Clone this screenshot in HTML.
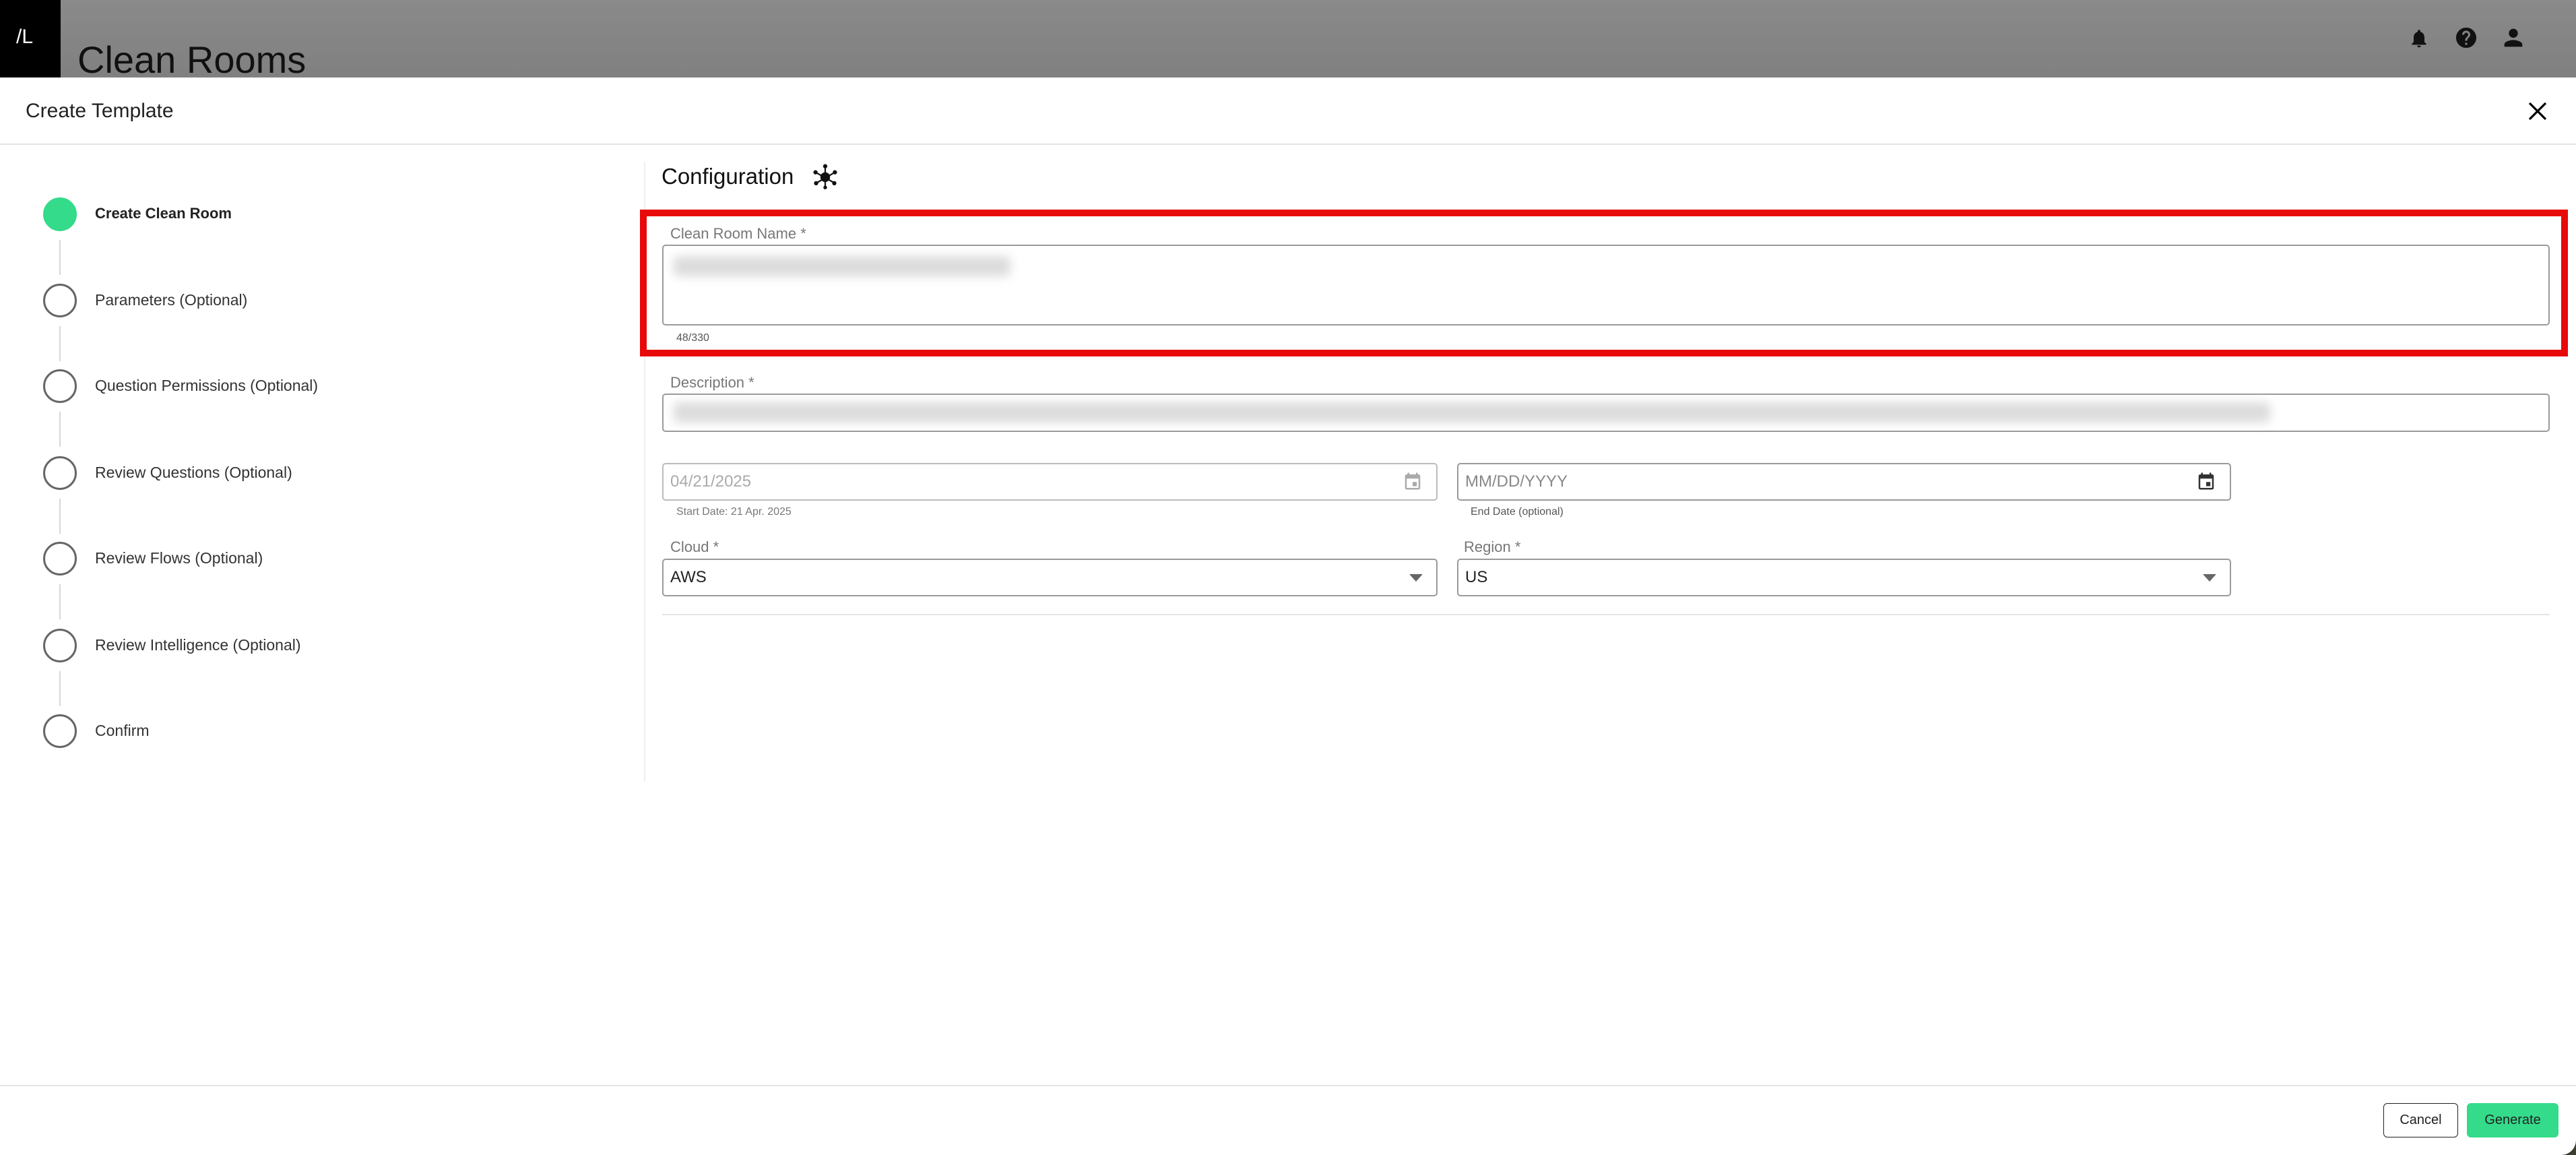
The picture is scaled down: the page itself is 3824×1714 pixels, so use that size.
<!DOCTYPE html>
<html><head><meta charset="utf-8"><style>
*{margin:0;padding:0;box-sizing:border-box}
body{width:3824px;height:1714px;position:relative;overflow:hidden;background:#3b3d2e;font-family:"Liberation Sans",sans-serif;color:#222}
.a{position:absolute}
.hdr{left:0;top:0;width:3824px;height:115px;background:linear-gradient(#8a8a8a,#808080)}
.logo{left:0;top:0;width:90px;height:115px;background:#000;color:#fff;font-size:30px;padding:38px 0 0 24px}
.modal{left:0;top:115px;width:3824px;height:1599px;background:#fff;border-radius:0 0 22px 0}
.circ{width:50px;height:50px;border-radius:50%;border:3px solid #666;left:64px}
.lbl{left:141px;font-size:23px;color:#333}
.conn{left:88px;width:2px;background:#d6d6d6;height:52px}
.flbl{font-size:22px;color:#777}
.box{border:2px solid #9a9a9a;border-radius:5px;background:#fff}
.blur{background:#dcdcdc;filter:blur(7px);border-radius:6px}
.help{font-size:16px;color:#777}
</style></head><body>
<div class="a hdr"></div>
<div class="a logo">/L</div>
<div class="a" style="left:115px;top:54px;font-size:56px;color:#111;line-height:70px">Clean Rooms</div>
<svg class="a" style="left:3575px;top:40px" width="32" height="34" viewBox="0 0 24 24"><path d="M12 22c1.1 0 2-.9 2-2h-4c0 1.1.9 2 2 2zm6-6v-5c0-3.07-1.64-5.64-4.5-6.32V4a1.5 1.5 0 0 0-3 0v.68C7.63 5.36 6 7.92 6 11v5l-2 2v1h16v-1l-2-2z" fill="#111"/></svg>
<svg class="a" style="left:3643px;top:38px" width="36" height="36" viewBox="0 0 24 24"><path d="M12 2C6.48 2 2 6.48 2 12s4.48 10 10 10 10-4.48 10-10S17.52 2 12 2zm1 17h-2v-2h2v2zm2.070-7.75-.9.92C13.45 12.9 13 13.5 13 15h-2v-.5c0-1.1.45-2.1 1.17-2.83l1.24-1.26c.37-.36.59-.86.59-1.41 0-1.1-.9-2-2-2s-2 .9-2 2H8c0-2.21 1.79-4 4-4s4 1.79 4 4c0 .88-.36 1.68-.93 2.25z" fill="#111"/></svg>
<svg class="a" style="left:3711px;top:36px" width="40" height="40" viewBox="0 0 24 24"><path d="M12 12c2.21 0 4-1.790 4-4s-1.79-4-4-4-4 1.79-4 4 1.79 4 4 4zm0 2c-2.67 0-8 1.34-8 4v2h16v-2c0-2.66-5.33-4-8-4z" fill="#111"/></svg>
<div class="a modal"></div>
<div class="a" style="left:38px;top:148px;font-size:30px;color:#222">Create Template</div>
<svg class="a" style="left:3752px;top:150px" width="30" height="30" viewBox="0 0 30 30"><path d="M3 3L27 27M27 3L3 27" stroke="#000" stroke-width="3.2"/></svg>
<div class="a" style="left:0;top:213px;width:3824px;height:2px;background:#e4e4e4"></div>
<div class="a" style="left:956px;top:240px;width:2px;height:920px;background:#efefef"></div>

<div class="a circ" style="top:293px;background:#34db8a;border-color:#34db8a"></div>
<div class="a lbl" style="top:304px;font-weight:bold;color:#222;font-size:22px">Create Clean Room</div>
<div class="a conn" style="top:356px"></div>
<div class="a circ" style="top:421px"></div><div class="a lbl" style="top:432px">Parameters (Optional)</div>
<div class="a conn" style="top:484px"></div>
<div class="a circ" style="top:548px"></div><div class="a lbl" style="top:559px">Question Permissions (Optional)</div>
<div class="a conn" style="top:611px"></div>
<div class="a circ" style="top:677px"></div><div class="a lbl" style="top:688px">Review Questions (Optional)</div>
<div class="a conn" style="top:740px"></div>
<div class="a circ" style="top:804px"></div><div class="a lbl" style="top:815px">Review Flows (Optional)</div>
<div class="a conn" style="top:867px"></div>
<div class="a circ" style="top:933px"></div><div class="a lbl" style="top:944px">Review Intelligence (Optional)</div>
<div class="a conn" style="top:996px"></div>
<div class="a circ" style="top:1060px"></div><div class="a lbl" style="top:1071px">Confirm</div>

<div class="a" style="left:982px;top:243px;font-size:33px;color:#111">Configuration</div>
<svg class="a" style="left:1207px;top:243px" width="36" height="38" viewBox="0 0 40 42"><g fill="#111"><circle cx="20" cy="22" r="8"/><circle cx="20" cy="4" r="3.5"/><circle cx="20" cy="39" r="3"/><circle cx="4" cy="14" r="3.5"/><circle cx="36" cy="14" r="3.5"/><circle cx="5" cy="32" r="3.5"/><circle cx="35" cy="32" r="3.5"/></g><g stroke="#111" stroke-width="2.5"><path d="M20 4V39M4 14L36 32M36 14L5 32"/></g></svg>

<div class="a" style="left:950px;top:311px;width:2862px;height:218px;border:10px solid #e8090b"></div>
<div class="a flbl" style="left:995px;top:334px">Clean Room Name *</div>
<div class="a box" style="left:983px;top:363px;width:2802px;height:120px"></div>
<div class="a blur" style="left:1000px;top:380px;width:500px;height:30px"></div>
<div class="a" style="left:1004px;top:493px;font-size:16px;color:#555">48/330</div>

<div class="a flbl" style="left:995px;top:555px">Description *</div>
<div class="a box" style="left:983px;top:584px;width:2802px;height:57px"></div>
<div class="a blur" style="left:1000px;top:597px;width:2370px;height:30px"></div>

<div class="a box" style="left:983px;top:687px;width:1151px;height:56px;border-color:#bbb"></div>
<div class="a" style="left:995px;top:701px;font-size:24px;color:#aaa">04/21/2025</div>
<svg class="a" style="left:2082px;top:699px" width="30" height="30" viewBox="0 0 24 24"><path d="M19 4h-1V2h-2v2H8V2H6v2H5a2 2 0 0 0-2 2v14a2 2 0 0 0 2 2h14a2 2 0 0 0 2-2V6a2 2 0 0 0-2-2zm0 16H5V9h14v11zm-7-7h5v5h-5z" fill="#aaa"/></svg>
<div class="a help" style="left:1004px;top:751px">Start Date: 21 Apr. 2025</div>

<div class="a box" style="left:2163px;top:687px;width:1149px;height:56px"></div>
<div class="a" style="left:2175px;top:701px;font-size:24px;color:#888">MM/DD/YYYY</div>
<svg class="a" style="left:3260px;top:699px" width="30" height="30" viewBox="0 0 24 24"><path d="M19 4h-1V2h-2v2H8V2H6v2H5a2 2 0 0 0-2 2v14a2 2 0 0 0 2 2h14a2 2 0 0 0 2-2V6a2 2 0 0 0-2-2zm0 16H5V9h14v11zm-7-7h5v5h-5z" fill="#333"/></svg>
<div class="a help" style="left:2183px;top:751px;color:#555">End Date (optional)</div>

<div class="a flbl" style="left:995px;top:799px">Cloud *</div>
<div class="a box" style="left:983px;top:829px;width:1151px;height:56px"></div>
<div class="a" style="left:995px;top:843px;font-size:24px;color:#222">AWS</div>
<svg class="a" style="left:2092px;top:852px" width="20" height="12"><path d="M0 0H20L10 11Z" fill="#666"/></svg>
<div class="a flbl" style="left:2173px;top:799px">Region *</div>
<div class="a box" style="left:2163px;top:829px;width:1149px;height:56px"></div>
<div class="a" style="left:2175px;top:843px;font-size:24px;color:#222">US</div>
<svg class="a" style="left:3270px;top:852px" width="20" height="12"><path d="M0 0H20L10 11Z" fill="#666"/></svg>
<div class="a" style="left:983px;top:911px;width:2802px;height:2px;background:#e4e4e4"></div>

<div class="a" style="left:0;top:1610px;width:3824px;height:2px;background:#e4e4e4"></div>
<div class="a" style="left:3538px;top:1637px;width:111px;height:51px;border:1.5px solid #222;border-radius:6px;font-size:20px;text-align:center;line-height:48px">Cancel</div>
<div class="a" style="left:3662px;top:1637px;width:136px;height:51px;background:#34db8a;border-radius:6px;font-size:20px;text-align:center;line-height:51px">Generate</div>
</body></html>
